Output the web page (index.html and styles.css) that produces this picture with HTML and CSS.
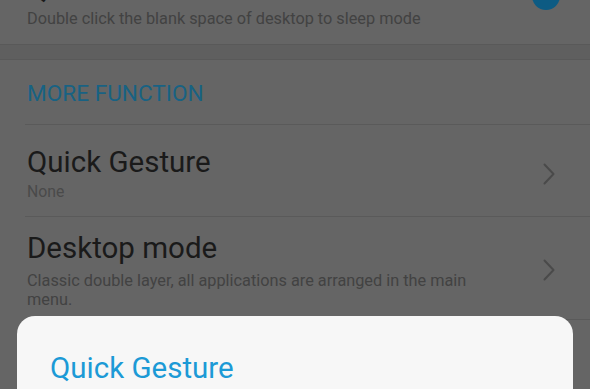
FILE: index.html
```html
<!DOCTYPE html>
<html lang="en">
<head>
<meta charset="utf-8">
<title>Desktop settings</title>
<link rel="stylesheet" href="styles.css">
</head>
<body>
<div class="screen">
  <section class="group">
    <div class="row toggle-row">
      <div class="text">
        <div class="title">Quick lock screen</div>
        <div class="desc">Double click the blank space of desktop to sleep mode</div>
      </div>
      <span class="switch"></span>
    </div>
  </section>
  <div class="gap"></div>
  <section class="group">
    <h2 class="group-head">MORE FUNCTION</h2>
    <div class="row nav-row r1">
      <div class="text">
        <div class="title">Quick Gesture</div>
        <div class="desc small">None</div>
      </div>
      <svg class="chev" viewBox="0 0 12 22" width="12" height="22"><path d="M1.5 1.5 L10.5 11 L1.5 20.5" fill="none" stroke="#4a4a4a" stroke-width="2" stroke-linecap="round" stroke-linejoin="round"/></svg>
    </div>
    <div class="row nav-row r2">
      <div class="text">
        <div class="title">Desktop mode</div>
        <div class="desc">Classic double layer, all applications are arranged in the main menu.</div>
      </div>
      <svg class="chev" viewBox="0 0 12 22" width="12" height="22"><path d="M1.5 1.5 L10.5 11 L1.5 20.5" fill="none" stroke="#4a4a4a" stroke-width="2" stroke-linecap="round" stroke-linejoin="round"/></svg>
    </div>
    <div class="row nav-row r3"></div>
  </section>
  <div class="sheet">
    <h3 class="sheet-title">Quick Gesture</h3>
  </div>
</div>
</body>
</html>
```
FILE: styles.css
```css
html, body {
  margin: 0;
  padding: 0;
}
body {
  width: 590px;
  height: 389px;
  overflow: hidden;
  background: #656565;
  font-family: Roboto, "Noto Sans", sans-serif;
}
.screen {
  position: relative;
  height: 389px;
  overflow: hidden;
}
.group {
  display: flex;
  flex-direction: column;
}
.row {
  display: flex;
  align-items: center;
  margin-left: 25px;
}
.text {
  flex: 1;
  min-width: 0;
  padding-left: 2px;
}
.title {
  font-size: 29.5px;
  line-height: 34px;
  color: #1a1a1a;
}
.desc {
  font-size: 16.3px;
  line-height: 19px;
  color: #424242;
}
.toggle-row {
  align-items: flex-start;
  margin-top: -28px;
  padding: 0 30px 16px 0;
}
.toggle-row .desc {
  margin-top: 3px;
}
.switch {
  width: 28px;
  height: 28px;
  margin-top: 10px;
  border-radius: 50%;
  background: #0d5b83;
}
.gap {
  height: 14px;
  background: #5f5f5f;
  border-top: 1px solid #595959;
  border-bottom: 1px solid #595959;
}
.group-head {
  margin: 0 0 0 27px;
  padding: 20px 0 16px;
  font-size: 22.6px;
  line-height: 28px;
  font-weight: 400;
  color: #186283;
}
.nav-row {
  border-top: 1px solid #5a5a5a;
  padding-right: 35px;
}
.nav-row .text {
  padding-right: 40px;
}
.r1 {
  padding-top: 20px;
  padding-bottom: 14px;
}
.r1 .desc {
  margin-top: 3px;
  font-size: 15.8px;
  line-height: 20px;
  color: #4a4a4a;
}
.r2 {
  padding-top: 14px;
  padding-bottom: 10px;
}
.r2 .desc {
  margin-top: 6px;
}
.r3 {
  height: 74px;
}
.chev {
  display: block;
  flex: none;
}
.sheet {
  position: absolute;
  left: 17px;
  top: 316px;
  width: 556px;
  height: 120px;
  background: #f7f7f7;
  border-radius: 18px 18px 0 0;
}
.sheet-title {
  margin: 0;
  padding: 35px 0 0 33px;
  font-size: 29.5px;
  line-height: 34px;
  font-weight: 400;
  color: #1c9ad6;
}
```
